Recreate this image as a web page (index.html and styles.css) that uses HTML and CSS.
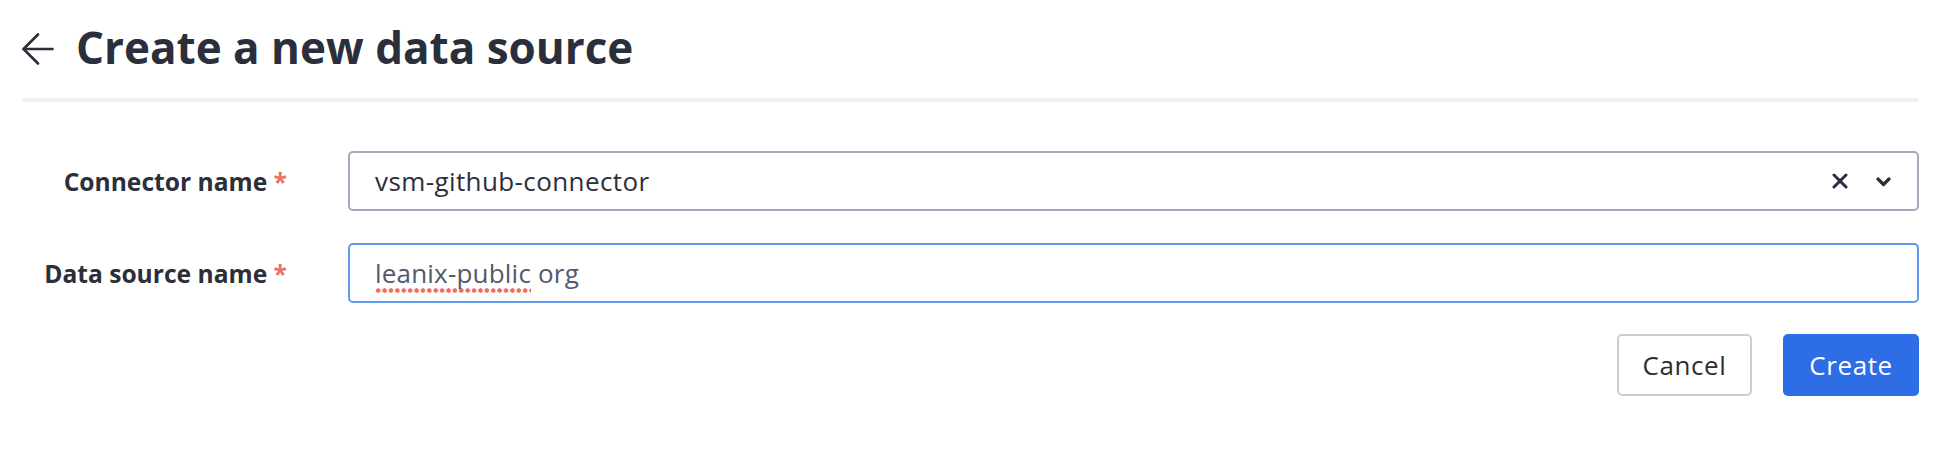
FILE: index.html
```html
<!DOCTYPE html>
<html lang="en">
<head>
<meta charset="utf-8">
<title>Create a new data source</title>
<link rel="stylesheet" href="styles.css">
</head>
<body>
<div class="page">
  <header class="header">
    <button class="back" type="button" aria-label="Back">
      <svg width="32" height="32" viewBox="0 0 32 32" fill="none" stroke="#2b2f3b" stroke-width="2.6" stroke-linecap="round" stroke-linejoin="round">
        <path d="M30.5 16H2"/>
        <path d="M16 1.5L1.5 16L16 30.5"/>
      </svg>
    </button>
    <h1 class="title">Create a new data source</h1>
  </header>
  <div class="divider"></div>
  <form class="form">
    <label class="label">Connector name <span class="req">*</span></label>
    <div class="field select">
      <span class="value">vsm-github-connector</span>
      <span class="icons">
        <svg class="icon-x" width="16" height="16" viewBox="0 0 16 16" fill="none" stroke="#2b2f3b" stroke-width="3" stroke-linecap="round">
          <path d="M2 2L14 14M14 2L2 14"/>
        </svg>
        <svg class="icon-chev" width="15" height="10" viewBox="0 0 15 10" fill="none" stroke="#2b2f3b" stroke-width="3.2" stroke-linecap="round" stroke-linejoin="round">
          <path d="M2 2L7.5 7.5L13 2"/>
        </svg>
      </span>
    </div>
    <label class="label">Data source name <span class="req">*</span></label>
    <div class="field focused">
      <span class="typed"><span class="misspelled">leanix-public</span> org</span>
    </div>
    <div class="actions">
      <button class="btn btn-cancel" type="button">Cancel</button>
      <button class="btn btn-create" type="button">Create</button>
    </div>
  </form>
</div>
</body>
</html>
```
FILE: styles.css
```css
* { box-sizing: border-box; }

html, body {
  margin: 0;
  padding: 0;
  background: #ffffff;
}

body {
  font-family: "Open Sans", "Noto Sans", sans-serif;
  color: #2b2f3b;
}

.page {
  padding: 0 35px 0 22px;
}

.header {
  height: 98px;
  padding-bottom: 4px;
  display: flex;
  align-items: center;
  gap: 22px;
}

.back {
  margin: 4px 0 0 0;
  padding: 0;
  border: 0;
  background: none;
  width: 32px;
  height: 32px;
  display: flex;
}

.title {
  margin: 0;
  font-size: 44px;
  font-weight: 700;
  line-height: 1.2;
  letter-spacing: 0;
  color: #2b2f3b;
}

.divider {
  height: 4px;
  background: #eff0f3;
  border-radius: 2px;
}

.form {
  margin-top: 49px;
  display: grid;
  grid-template-columns: 265px 1fr;
  column-gap: 61px;
  row-gap: 32px;
  align-items: center;
}

.label {
  text-align: right;
  font-size: 24.6px;
  font-weight: 700;
  color: #2b2f3b;
  white-space: nowrap;
}

.req {
  color: #e8716b;
}

.field {
  height: 60px;
  border: 2px solid #a0aabb;
  border-radius: 5px;
  padding: 0 26px 0 25px;
  display: flex;
  align-items: center;
  font-size: 26px;
  letter-spacing: 0.4px;
  background: #fff;
}

.field.focused {
  border-color: #6199ee;
}

.value {
  flex: 1;
  color: #2b2f3b;
}

.icons {
  display: flex;
  align-items: center;
  gap: 28px;
}

.icon-chev {
  margin-top: 1px;
}

.typed {
  color: #515a6d;
  letter-spacing: 0.2px;
}

.misspelled {
  padding-bottom: 2px;
  background-image: radial-gradient(circle, #ee6e5f 2px, transparent 2.4px);
  background-size: 6.4px 5px;
  background-repeat: repeat-x;
  background-position: 0 100%;
}

.actions {
  grid-column: 1 / -1;
  margin-top: -1px;
  display: flex;
  justify-content: flex-end;
  gap: 31px;
}

.btn {
  height: 62px;
  border-radius: 5px;
  font-family: "Open Sans", "Noto Sans", sans-serif;
  font-size: 26px;
  font-weight: 400;
  letter-spacing: 0.6px;
  cursor: pointer;
}

.btn-cancel {
  width: 135px;
  background: #ffffff;
  border: 2px solid #cdcdcd;
  color: #2e2e2e;
}

.btn-create {
  width: 136px;
  background: #2d6de6;
  border: 0;
  color: #ffffff;
}
```
